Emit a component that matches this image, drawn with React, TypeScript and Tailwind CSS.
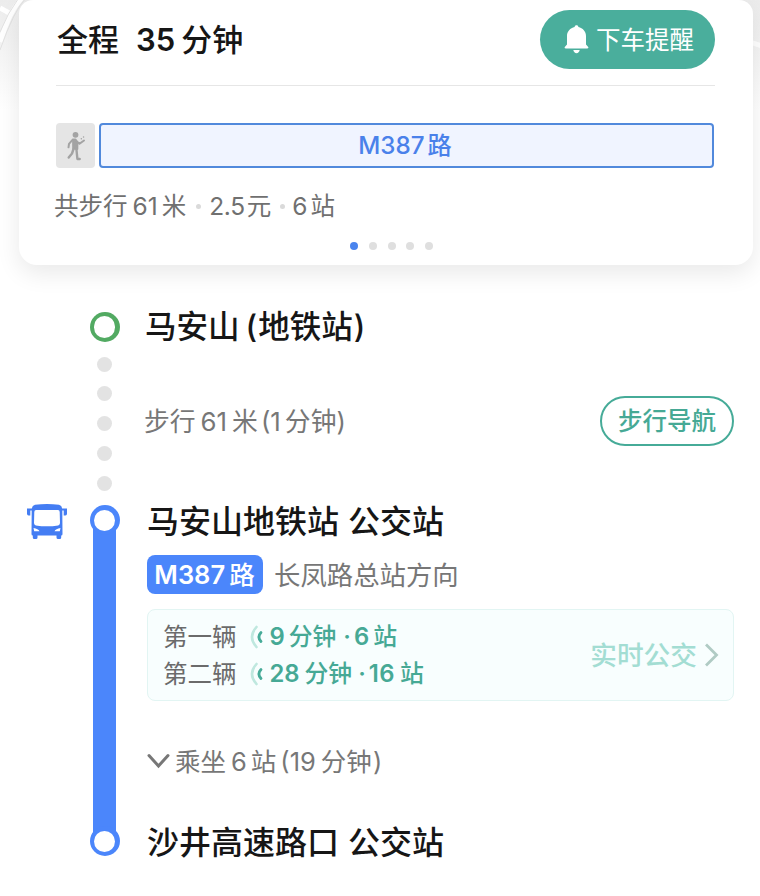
import type { ReactNode } from 'react';

const walkDots = [0, 1, 2, 3, 4];
const pages = [0, 1, 2, 3, 4];

function BellIcon() {
  return (
    <svg width="25" height="29" viewBox="0 0 25 29" fill="#fff" aria-hidden="true">
      <path d="M12.5 0.3c1 0 1.8.7 1.9 1.6 4.4.9 7.6 4.500 7.600 9v8.500l2 2.300c.8 1 .4 1.700-.8 1.700H1.800c-1.200 0-1.600-.7-.8-1.700l2-2.300v-8.500c0-4.500 3.200-8.100 7.600-9 .1-.9.900-1.600 1.900-1.600z" />
      <path d="M9.300 25h6.400c-.3 1.900-1.600 3.200-3.200 3.200S9.600 26.900 9.300 25z" />
    </svg>
  );
}

function WalkIcon() {
  return (
    <svg width="20" height="30" viewBox="0 0 20 30" fill="none" stroke="#a3a3a3" strokeLinecap="round" strokeLinejoin="round" aria-hidden="true">
      <circle cx="9.500" cy="3.800" r="2.900" fill="#a3a3a3" stroke="none" />
      <path d="M7 8.500h2.600l1.900 3-.1 6.500-4.300-.5z" fill="#a3a3a3" strokeWidth="1.800" />
      <path d="M6.500 8.800l-3.500 4-.5 3.500" strokeWidth="2" />
      <path d="M10.800 10.500l2.700 2.300 4.500-3.300" strokeWidth="2" />
      <path d="M7.500 18l-1.500 4.500-3.300 4" strokeWidth="2.400" />
      <path d="M10.400 18l1 10h2.300" strokeWidth="2.400" />
      <path d="M15.300 7.800h.1M17.500 6h.1" strokeWidth="1.400" />
    </svg>
  );
}

function BusIcon() {
  return (
    <svg width="42" height="36" viewBox="0 0 42 36" fill="#447df3" aria-hidden="true">
      <path
        fillRule="evenodd"
        d="M9 0.800Q21-.8 33 .8Q35.800 1.500 36.200 4.500H41V9.500Q41 11.500 39.500 11.500H37.700V6.500H36.300L36.500 30Q36.500 31.500 35.200 31.500V33.500Q35.200 35 33.700 35H32Q30.500 35 30.500 33.500V31.500H11.500V33.500Q11.500 35 10 35H8.300Q6.800 35 6.800 33.500V31.500Q5.500 31.500 5.500 30L5.700 6.500H4.300V11.500H2.500Q1 11.500 1 9.500V4.500H5.800Q6.200 1.500 9 .8ZM10 6Q8.300 6 8.300 8L8 19Q8 21 9.800 21.400Q21 23.300 32.200 21.400Q34 21 34 19L33.700 8Q33.700 6 32 6ZM7.500 24L8.200 27.200H13.500Q12.200 24.700 7.500 24ZM34.500 24L33.800 27.200H28.500Q29.800 24.700 34.500 24Z"
      />
    </svg>
  );
}

function SignalIcon() {
  return (
    <svg width="13" height="24" viewBox="0 0 13 24" fill="none" strokeLinecap="round" aria-hidden="true">
      <path d="M6.500 2Q-2.500 12 6.500 22" stroke="#bfe8df" strokeWidth="2.600" />
      <path d="M11 7.500Q6.800 12 11 16.500" stroke="#46ab98" strokeWidth="2.800" />
    </svg>
  );
}

/* Latin digits inside a Chinese line, with a little air on both sides */
function Num({ children, className = 'ml-[5px] mr-[4px]' }: { children: ReactNode; className?: string }) {
  return <span className={className}>{children}</span>;
}

function Ring({ className }: { className: string }) {
  return (
    <div className={['relative flex size-[30px] shrink-0 rounded-full p-[4.400px]', className].join(' ')}>
      <span className="flex-1 rounded-full bg-white" />
    </div>
  );
}

function MapBackdrop() {
  return (
    <div className="absolute inset-x-0 top-0 h-[110px] bg-linear-to-b from-[#ececec] to-white">
      <svg width="760" height="110" fill="none" aria-hidden="true">
        <path d="M0 8L11 14M22-2Q10 10 0 42" stroke="#fff" strokeWidth="5" />
        <path d="M20-4Q7 14 0 32M26-2Q14 10 0 50" stroke="#e2e2e2" strokeWidth="1" />
        <path d="M750 42l12 4" stroke="#fff" strokeWidth="5" />
      </svg>
    </div>
  );
}

function SummaryCard() {
  return (
    <section className="relative ml-[19px] h-[265px] w-[734px] rounded-b-[18px] rounded-t-[14px] bg-white pl-[37px] pr-[38px] shadow-[0_8px_24px_rgba(0,0,0,0.09)]">
      <div className="flex h-[86px] items-start justify-between border-b-[1.5px] border-[#e6e6e6] pt-[10px]">
        <h1 className="ml-[1px] flex h-[58px] items-center text-[31px] font-medium text-[#161616]">
          全程<Num className="ml-[17px] mr-[6px] font-semibold">35</Num>分钟
        </h1>
        <button className="flex h-[59px] w-[175px] items-center rounded-full bg-[#4aae9c] pl-[24px] text-[24.5px] text-white">
          <BellIcon />
          <span className="ml-[7px] mt-[2px]">下车提醒</span>
        </button>
      </div>

      <div className="mt-[37px] flex h-[45px] gap-[4px]">
        <div className="flex w-[39px] items-center justify-center rounded-[4px] bg-[#e5e5e5]">
          <WalkIcon />
        </div>
        <div className="mr-[1px] flex flex-1 items-center justify-center rounded-[4px] border-2 border-[#5189dc] bg-[#f0f4ff] pr-[3px] pt-[2px] text-[24.200px] font-medium text-[#4a81ea]">
          <Num className="mr-[3px]">M387</Num>路
        </div>
      </div>

      <p className="-ml-[2px] mt-[20px] flex h-[36px] items-center text-[24.5px] text-[#707070]">
        共步行<Num>61</Num>米
        <i className="ml-[10px] mr-[8px] size-[5px] rounded-full bg-[#dadada]" />
        <Num className="mr-[2px] tracking-[-0.3px]">2.5</Num>元
        <i className="ml-[9px] mr-[7px] size-[5px] rounded-full bg-[#dadada]" />
        <Num className="mr-[3px]">6</Num>站
      </p>

      <div className="mt-[18px] flex justify-center gap-[10.700px] pl-[12px]">
        {pages.map((page) => (
          <span key={page} className={['size-[8px] rounded-full', page === 0 ? 'bg-[#4a84ee]' : 'bg-[#dfdfdf]'].join(' ')} />
        ))}
      </div>
    </section>
  );
}

function Rail() {
  return (
    <div className="flex w-[31px] flex-col items-center pt-[47px]">
      <Ring className="bg-[#52aa62]" />
      <div className="mt-[14.500px] flex flex-col gap-[14.800px]">
        {walkDots.map((dot) => (
          <span key={dot} className="size-[15px] rounded-full bg-[#e3e3e3]" />
        ))}
      </div>
      <Ring className="z-10 mt-[14.800px] bg-[#4b86fb]" />
      <div className="-my-[8px] h-[307px] w-[23px] shrink-0 bg-[#4b86fb]" />
      <Ring className="z-10 bg-[#4b86fb]" />
    </div>
  );
}

function Arrival({ label, children }: { label: string; children: ReactNode }) {
  return (
    <div className="flex h-[37px] items-center text-[24.5px] text-[#6b6b6b]">
      {label}
      <span className="ml-[13px] mr-[7px]">
        <SignalIcon />
      </span>
      <span className="flex items-center text-[23.800px] font-medium text-[#46a995]">{children}</span>
    </div>
  );
}

function Steps() {
  return (
    <div className="w-[589px] pl-[2px]">
      <h2 className="-ml-[2px] mt-[39px] flex h-[46px] items-center text-[31.500px] font-medium text-[#161616]">
        马安山<span className="ml-[6px] mr-[1px]">(</span>地铁站<span className="ml-[1px]">)</span>
      </h2>

      <div className="-ml-[3px] mt-[46px] flex h-[50px] items-center justify-between text-[25.800px] text-[#777]">
        <p className="flex items-center pt-[2px]">
          步行<Num className="ml-[5px] mr-[5px]">61</Num>米<Num className="ml-[3px] mr-[4px]">(1</Num>分钟<span>)</span>
        </p>
        <button className="h-[50px] w-[134px] rounded-full border-2 border-[#46ab98] pt-[1px] text-[24.5px] font-medium text-[#46a995]">步行导航</button>
      </div>

      <h2 className="mt-[53px] flex h-[46px] items-center gap-[9px] text-[32px] font-medium text-[#161616]">
        <span>马安山地铁站</span>
        <span>公交站</span>
      </h2>

      <div className="mt-[10px] flex h-[39px] items-center text-[26.400px] text-[#777]">
        <span className="flex h-full w-[116px] items-center justify-center rounded-[8px] bg-[#4b86fb] pr-[1px] text-[25.500px] font-medium text-white">
          <Num className="mr-[4px] font-semibold">M387</Num>路
        </span>
        <span className="ml-[11px] mt-[2px]">长凤路总站方向</span>
      </div>

      <div className="mt-[15px] flex h-[92px] items-center justify-between rounded-[8px] border-[1.5px] border-[#e2f5f3] bg-[#f8fefe] pl-[15px] pr-[14px]">
        <div className="pt-[1px]">
          <Arrival label="第一辆">
            <Num className="mr-[4px] font-semibold">9</Num>分钟<Num className="ml-[7px] mr-[3px] font-semibold">·</Num><Num className="mr-[4px] font-semibold">6</Num>站
          </Arrival>
          <Arrival label="第二辆">
            <Num className="mr-[5px] font-semibold">28</Num>分钟<Num className="ml-[6px] mr-[3px] font-semibold">·</Num><Num className="mr-[5px] font-semibold tracking-[0.5px]">16</Num>站
          </Arrival>
        </div>
        <div className="flex items-center text-[26.700px] text-[#a3ddd3]">
          <span className="mt-[1px] font-medium">实时公交</span>
          <svg className="ml-[7px]" width="15" height="24" fill="none" stroke="#b0cbc4" strokeWidth="2.800" aria-hidden="true">
            <path d="M2 1.500L12.500 12L2 22.500" />
          </svg>
        </div>
      </div>

      <div className="mt-[39px] flex h-[44px] items-center text-[25.500px] text-[#777]">
        <svg className="mr-[4px] -mt-[2px]" width="24" height="16" fill="none" stroke="#777" strokeWidth="3" strokeLinecap="round" aria-hidden="true">
          <path d="M2 2.500L11.500 13L21 2.500" />
        </svg>
        乘坐<Num>6</Num>站<Num className="ml-[4px] mr-[5px]">(19</Num>分钟<span className="ml-[1px]">)</span>
      </div>

      <h2 className="mt-[36px] flex h-[46px] items-center gap-[9px] text-[32px] font-medium text-[#161616]">
        <span>沙井高速路口</span>
        <span>公交站</span>
      </h2>
    </div>
  );
}

export default function App() {
  return (
    <main className="relative h-[896px] w-[760px] overflow-hidden bg-white font-['Inter','Noto_Sans_CJK_SC',sans-serif] leading-none">
      <MapBackdrop />
      <SummaryCard />
      <div className="flex">
        <div className="w-[89px] pl-[26px] pt-[239px]">
          <BusIcon />
        </div>
        <Rail />
        <div className="ml-[25px]">
          <Steps />
        </div>
      </div>
    </main>
  );
}
